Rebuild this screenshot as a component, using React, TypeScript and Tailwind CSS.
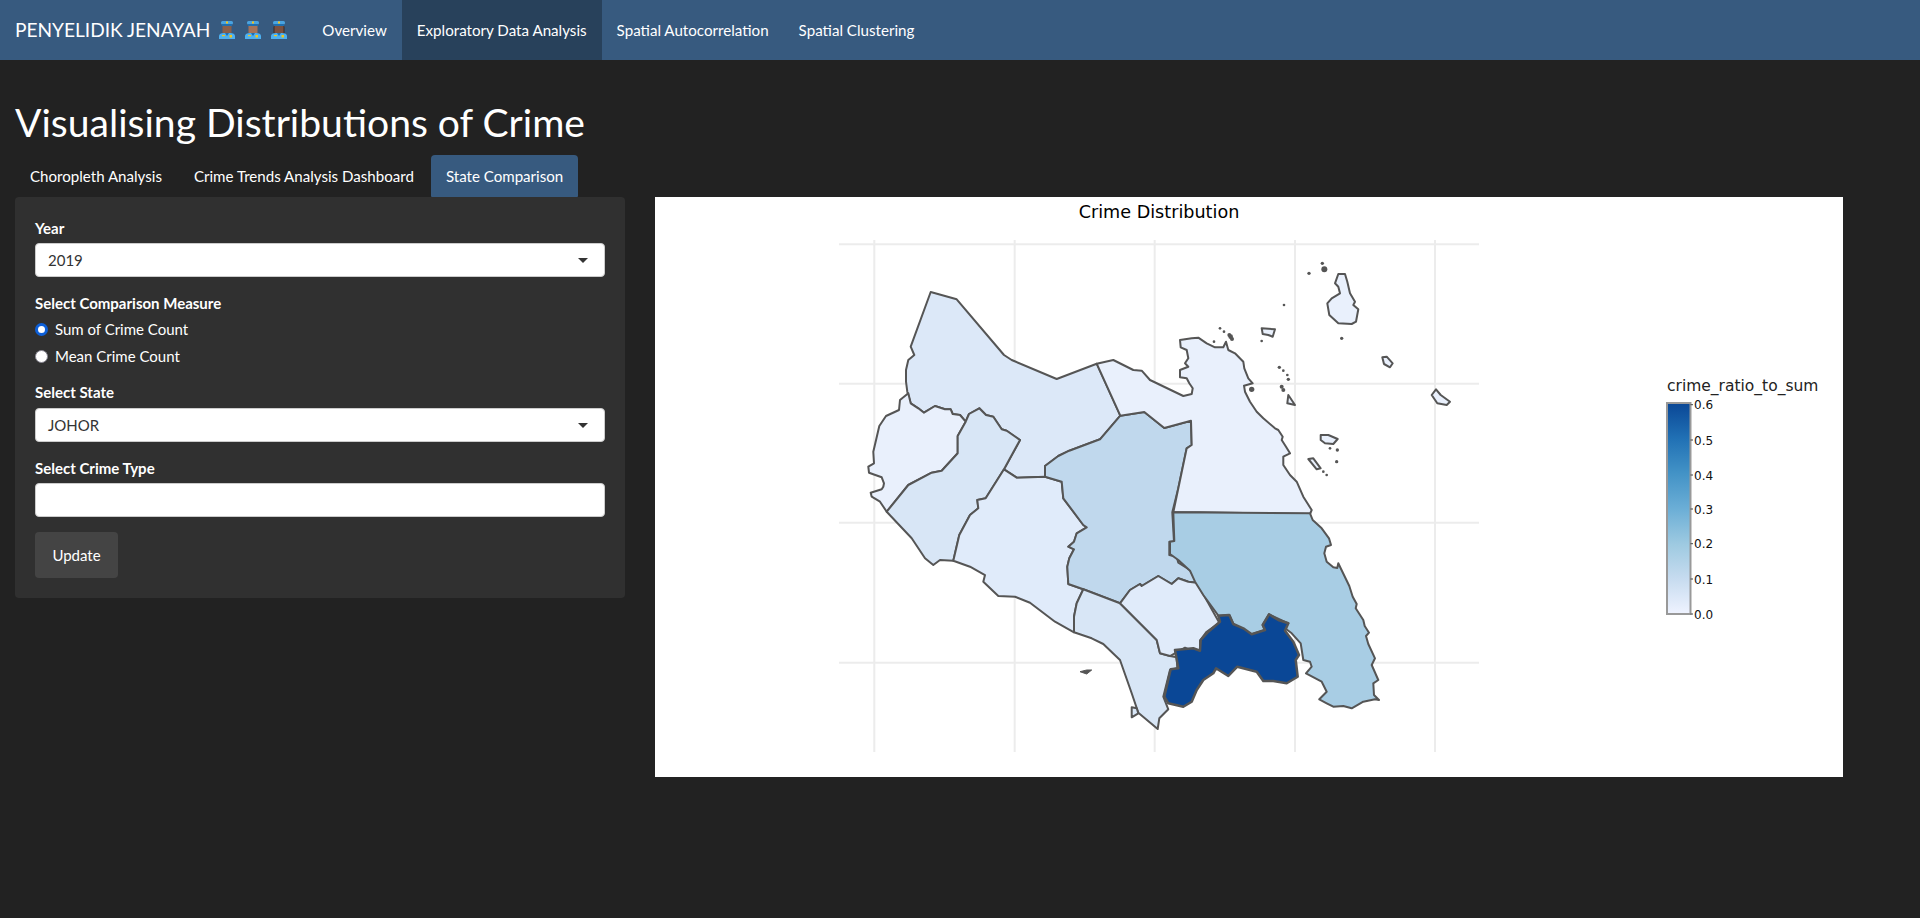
const font = "font-['Lato','Noto_Sans',sans-serif]";

// map points were read off zoomed crops, each crop has its own origin at 3x
const at = (ox: number, oy: number, s: string) =>
  s
    .trim()
    .split(/\s+/)
    .map((p) => {
      const [x, y] = p.split(",").map(Number);
      return `${(ox + x / 3).toFixed(1)},${(oy + y / 3).toFixed(1)}`;
    })
    .join(" ");
const A = (s: string) => at(820, 190, s);
const B = (s: string) => at(820, 470, s);
const C = (s: string) => at(1130, 480, s);
const D = (s: string) => at(1200, 240, s);

const regions: { fill: string; points: string; width?: number }[] = [
  {
    fill: "#dce8f8",
    points: A(
      "332,306 410,328 552,495 575,510 710,567 830,521 901,677 840,748 748,782 715,798 675,828 675,860 590,863 552,838 600,750 560,722 545,718 520,680 498,675 478,655 447,672 437,695 420,675 398,672 392,658 375,658 345,648 312,668 295,655 272,640 262,605 258,575 258,540 265,510 283,495 272,470",
    ),
  },
  {
    fill: "#e9f0fc",
    points: [
      A(
        "265,610 240,630 237,660 198,678 178,708 160,785 162,820 145,830 147,848 185,862 192,880",
      ),
      B("190,50 185,58 152,68 155,80 180,95 200,125 265,45"),
      A(
        "335,848 365,842 413,790 413,738 437,695 420,675 398,672 392,658 375,658 345,648 312,668 295,655 272,640",
      ),
    ].join(" "),
  },
  {
    fill: "#d8e6f6",
    points: [
      A("437,695 447,672 478,655 498,675 520,680 545,718 560,722 600,750 552,838"),
      B(
        "497,85 472,90 475,115 450,135 418,195 400,272 360,270 340,285 315,265 275,205 200,125 265,45",
      ),
      A("335,848 365,842 413,790 413,738"),
    ].join(" "),
  },
  {
    fill: "#e0ebfa",
    points: [
      A("552,838 590,863 675,860"),
      B(
        "725,35 730,85 790,165 800,172 770,190 762,215 745,230 762,238 748,265 742,290 745,342 790,358 770,400 762,440 762,487 705,455 630,398 585,380 535,378 490,335 495,315 450,290 400,272 418,195 450,135 475,115 472,90 497,85",
      ),
    ].join(" "),
  },
  {
    fill: "#c0d8ed",
    points: [
      A("675,828 715,798 748,782 840,748 901,677 973,666 1033,714 1113,692 1115,765 1100,775 1075,895"),
      B(
        "1057,127 1062,215 1048,215 1048,255 1070,260 1075,278 1110,300 1130,338 1105,335 1075,325 1055,342 1015,318 965,348 960,342 930,360 900,400 790,358 745,342 742,290 748,265 762,238 745,230 762,215 770,190 800,172 790,165 730,85 725,35 675,20",
      ),
    ].join(" "),
  },
  {
    fill: "#d8e6f6",
    points: B(
      "790,358 900,400 1010,510 1020,550 1050,558 1070,562 1072,595 1050,600 1030,680 1045,718 1018,745 1013,777 955,728 935,670 900,570 850,522 815,505 762,487 762,440 770,400",
    ),
  },
  {
    fill: "#e0ebfa",
    points: B(
      "900,400 930,360 960,342 965,348 1015,318 1055,342 1075,325 1105,335 1130,338 1155,382 1198,458 1160,485 1140,512 1140,540 1120,545 1095,533 1050,558 1020,550 1010,510",
    ),
  },
  {
    fill: "#e9f0fc",
    points: [
      A(
        "830,521 880,510 940,540 965,542 990,570 1090,618 1115,612 1118,595 1108,580 1100,565 1080,562 1080,540 1105,530 1095,520 1105,505 1100,480 1082,472 1080,450 1115,445 1135,443",
      ),
      D(
        "20,310 45,322 70,322 78,305 85,330 105,340 130,365 133,385 145,415 158,430 132,437 135,455 150,485 170,515 190,535 225,565 235,570 248,590 245,600 258,620 270,640 250,650 250,675 270,705 290,725 310,770 335,810 330,822 0,817",
      ),
      C("130,97"),
      A("1100,775 1115,765 1113,692 1033,714 973,666 901,677"),
    ].join(" "),
  },
  {
    fill: "#a8cde4",
    points: C(
      "130,97 540,100 548,120 575,145 597,175 603,195 588,200 583,220 590,245 610,262 622,264 625,250 632,265 658,318 668,350 680,372 677,385 700,420 704,438 717,458 708,468 715,492 735,535 725,555 745,600 730,610 732,645 747,660 735,658 700,665 665,685 640,678 610,680 590,670 568,658 590,635 575,605 528,580 545,560 540,545 520,540 512,490 485,460 465,445 475,430 417,403 398,435 405,450 365,463 310,432 298,405 265,407 220,345 195,305 180,272 145,240 120,222 120,185 133,183",
    ),
  },
  {
    fill: "#0a4796",
    width: 2.5,
    points: C(
      "265,407 298,405 310,432 340,445 365,463 405,450 398,435 417,403 445,420 475,430 465,452 490,485 507,525 497,540 503,590 470,610 430,603 400,603 380,575 322,560 295,588 258,565 250,580 220,600 200,630 185,665 160,680 115,670 103,650 122,568 145,565 135,510 190,505 210,512 212,480 235,455 270,425",
    ),
  },
];

const islands = [
  "547,352 560,350 578,370 570,382 552,372",
  "695,465 708,448 722,465 750,485 740,495 712,490",
  "362,585 385,585 413,597 400,612 375,610 362,600",
  "262,490 265,465 285,495",
  "185,265 225,268 218,290 205,285 188,282",
  "325,657 340,655 362,685 350,688",
];

const specks = [
  [367, 70, 5],
  [373, 88, 9],
  [327, 100, 5],
  [252, 195, 4],
  [425, 295, 5],
  [412, 630, 5],
  [410, 665, 5],
  [390, 625, 4],
  [60, 265, 4],
  [72, 275, 4],
  [88, 285, 6],
  [92, 290, 7],
  [96, 297, 6],
  [42, 305, 4],
  [185, 303, 4],
  [238, 382, 5],
  [250, 392, 4],
  [262, 405, 4],
  [265, 418, 5],
  [245, 440, 6],
  [250, 450, 6],
  [155, 448, 8],
  [370, 695, 4],
  [380, 705, 4],
];

const gridX = [874.3, 1014.7, 1154.7, 1295, 1435];
const gridY = [244.3, 383.7, 522.7, 662.7];
const ticks = [
  ["0.6", 404.7],
  ["0.5", 440],
  ["0.4", 475],
  ["0.3", 509],
  ["0.2", 543.7],
  ["0.1", 579],
  ["0.0", 614],
] as const;

const CrimeMap = () => (
  <svg viewBox="655 197 1188 580" className="block h-[580px] w-[1188px] bg-white">
    <defs>
      <linearGradient id="blues" x1="0" y1="1" x2="0" y2="0">
        <stop offset="0" stopColor="#eff3ff" />
        <stop offset="0.17" stopColor="#c6dbef" />
        <stop offset="0.33" stopColor="#9ecae1" />
        <stop offset="0.5" stopColor="#6baed6" />
        <stop offset="0.67" stopColor="#4292c6" />
        <stop offset="0.83" stopColor="#2171b5" />
        <stop offset="1" stopColor="#0a4796" />
      </linearGradient>
    </defs>
    <text x="1159" y="218" textAnchor="middle" fontFamily="DejaVu Sans" fontSize="17.6" fill="#000">
      Crime Distribution
    </text>
    {gridX.map((x) => (
      <line key={x} x1={x} x2={x} y1={240} y2={752} stroke="#ececec" strokeWidth="2" />
    ))}
    {gridY.map((y) => (
      <line key={y} x1={839} x2={1479} y1={y} y2={y} stroke="#ececec" strokeWidth="2" />
    ))}
    <g stroke="#555" strokeLinejoin="round">
      {regions.map((r, i) => (
        <polygon key={i} points={r.points} fill={r.fill} strokeWidth={r.width ?? 2} />
      ))}
      <polygon
        points={at(
          1290,
          260,
          "145,42 165,42 172,65 180,100 195,125 190,135 205,148 198,185 185,192 145,190 118,165 112,130 125,115 150,100 145,80 135,70",
        )}
        fill="#e9f0fc"
        strokeWidth="2"
      />
      {islands.map((s) => (
        <polygon key={s} points={D(s)} fill="#e9f0fc" strokeWidth="2" />
      ))}
      <polygon points={B("935,712 950,715 955,730 935,742")} fill="#d8e6f6" strokeWidth="2" />
      <polygon points={B("780,605 800,600 815,600 800,612")} fill="#555" strokeWidth="1" />
    </g>
    <g fill="#555">
      {specks.map(([x, y, size]) => (
        <circle key={`${x}-${y}`} cx={1200 + x / 3} cy={240 + y / 3} r={size / 3} />
      ))}
    </g>
    <text x="1667" y="391" fontFamily="DejaVu Sans" fontSize="15.5" fill="#222">
      crime_ratio_to_sum
    </text>
    <rect x="1667" y="403" width="23.5" height="211" fill="url(#blues)" stroke="#999" strokeWidth="2" />
    {ticks.map(([label, y]) => (
      <g key={label}>
        <line x1={1690.5} x2={1693} y1={y} y2={y} stroke="#444" />
        <text x="1694" y={y + 4.5} fontFamily="DejaVu Sans" fontSize="12" fill="#111">
          {label}
        </text>
      </g>
    ))}
  </svg>
);

const Officer = ({ face, hair }: { face: string; hair?: boolean }) => (
  <svg viewBox="0 0 16 18" className="h-[18px] w-4">
    {hair && <rect x="2.5" y="5" width="11" height="8" rx="1" fill="#3a2a25" />}
    <rect x="3.5" y="4" width="9" height="8" fill={face} />
    <path d="M0 18v-3c0-2 2-3 5-3h6c3 0 5 1 5 3v3z" fill="#4db0f0" />
    <path d="M6 12h4l-2 3z" fill="#1f6fb0" />
    <rect x="2" y="0" width="12" height="3.5" rx="1.5" fill="#4aa3e0" />
    <rect x="3" y="3" width="10" height="2" fill="#1f6fb0" />
    <rect x="7" y="0.5" width="2" height="2" fill="#f5c518" />
    <rect x="10.5" y="14" width="2.5" height="2.5" fill="#f5c518" />
    <rect x="3" y="14" width="3" height="1.2" fill="#f5c518" />
  </svg>
);

const Caret = () => (
  <span className="h-0 w-0 border-x-[5px] border-t-[5px] border-x-transparent border-t-[#333]" />
);

const SelectBox = ({ value }: { value: string }) => (
  <div className="flex h-[34px] w-full items-center justify-between rounded-[4px] border border-[#ccc] bg-white pl-3 pr-[16px] text-[15px] text-[#333]">
    <span>{value}</span>
    <Caret />
  </div>
);

const FieldLabel = ({ children }: { children: string }) => (
  <div className="mb-[4px] text-[15px] leading-[22px] font-bold text-white">{children}</div>
);

const Radio = ({ label, checked }: { label: string; checked?: boolean }) => (
  <label className="flex h-[27px] items-center gap-[7px] leading-none">
    <input
      type="radio"
      name="measure"
      defaultChecked={checked}
      className="m-0 h-[13px] w-[13px] appearance-none rounded-full border-[1.5px] border-[#8a8894] bg-white checked:border-[3.5px] checked:border-[#0d5fd8]"
    />
    {label}
  </label>
);

const navItems = ["Overview", "Exploratory Data Analysis", "Spatial Autocorrelation", "Spatial Clustering"];
const tabs = ["Choropleth Analysis", "Crime Trends Analysis Dashboard", "State Comparison"];

export default function App() {
  return (
    <div className={`${font} min-h-screen bg-[#222222] text-[15px] text-white`}>
      <nav className="flex h-[60px] items-center bg-[#375a7f] pl-[15px]">
        <span className="flex items-center text-[19.1px]">
          PENYELIDIK JENAYAH
          <span className="ml-[9px] flex gap-[10px]">
            <Officer face="#8a5f4a" />
            <Officer face="#a5735a" />
            <Officer face="#7a5040" hair />
          </span>
        </span>
        <ul className="ml-[20px] flex text-[15.15px]">
          {navItems.map((item) => (
            <li
              key={item}
              className={`flex h-[60px] items-center px-[15px] ${item === "Exploratory Data Analysis" ? "bg-[#28415b]" : ""}`}
            >
              {item}
            </li>
          ))}
        </ul>
      </nav>

      <main className="px-[15px]">
        <h2 className="mt-[39px] mb-[10px] text-[39.1px] leading-[46px] font-normal">
          Visualising Distributions of Crime
        </h2>
        <ul className="flex gap-[2px] text-[15.1px]">
          {tabs.map((tab) => (
            <li
              key={tab}
              className={`flex h-[42px] items-center rounded-t-[4px] px-[15px] ${tab === "State Comparison" ? "rounded-b-[1px] bg-[#375a7f]" : ""}`}
            >
              {tab}
            </li>
          ))}
        </ul>
        <div className="flex gap-[30px]">
          <form className="h-[401px] w-[610px] shrink-0 rounded-[4px] bg-[#303030] px-[20px] pt-[20px]">
            <FieldLabel>Year</FieldLabel>
            <SelectBox value="2019" />
            <div className="mt-[15px]">
              <FieldLabel>Select Comparison Measure</FieldLabel>
              <div className="-mt-[2px]">
                <Radio label="Sum of Crime Count" checked />
                <Radio label="Mean Crime Count" />
              </div>
            </div>
            <div className="mt-[11px]">
              <div className="mb-[5px] text-[15px] leading-[22px] font-bold text-white">Select State</div>
              <SelectBox value="JOHOR" />
            </div>
            <div className="mt-[15px]">
              <FieldLabel>Select Crime Type</FieldLabel>
              <div className="h-[34px] w-full rounded-[4px] border border-[#ccc] bg-white" />
            </div>
            <button
              type="button"
              className="mt-[15px] h-[46px] w-[83px] rounded-[4px] bg-[#444444] text-[15px] text-white"
            >
              Update
            </button>
          </form>
          <CrimeMap />
        </div>
      </main>
    </div>
  );
}
